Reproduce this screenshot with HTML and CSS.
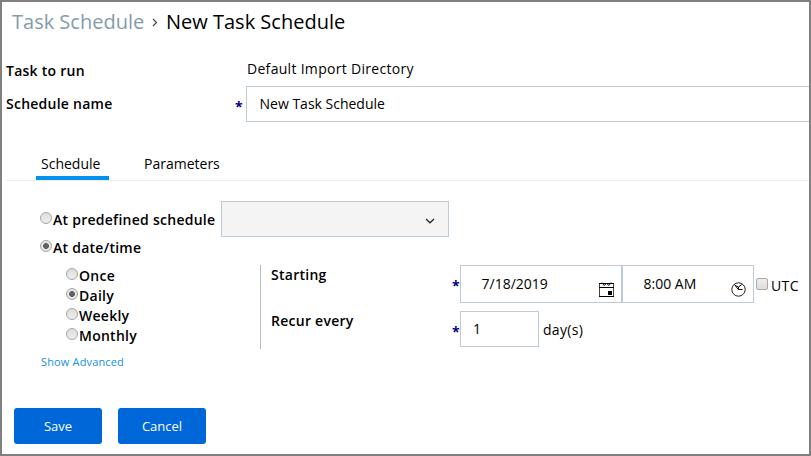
FILE: index.html
```html
<!DOCTYPE html>
<html lang="en">
<head>
<meta charset="utf-8">
<title>New Task Schedule</title>
<link rel="stylesheet" href="styles.css">
</head>
<body>
<main class="page">
  <nav class="breadcrumb">
    <a class="crumb">Task Schedule</a>
    <svg class="crumb-arrow" width="6" height="9" viewBox="0 0 6 9"><path d="M1 1l3.5 3.5L1 8" fill="none" stroke="#444" stroke-width="1.2"/></svg>
    <span class="current">New Task Schedule</span>
  </nav>
  <div class="row task-row"><span class="label">Task to run</span><span class="task-value">Default Import Directory</span></div>
  <div class="row name-row"><span class="label">Schedule name</span><span class="required">*</span><div class="field name-field"><span>New Task Schedule</span></div></div>
  <div class="tabs"><a class="tab active"><span>Schedule</span></a><a class="tab"><span>Parameters</span></a></div>
  <section class="schedule">
    <div class="row predefined"><i class="radio"></i><span class="predefined-label">At predefined schedule</span>
      <div class="select"><svg width="10" height="6" viewBox="0 0 10 6"><path d="M1 1l4 3.8L9 1" fill="none" stroke="#222" stroke-width="1.2"/></svg></div></div>
    <div class="row datetime"><i class="radio checked"></i><span>At date/time</span></div>
    <div class="details">
      <div class="frequency">
        <div class="option"><i class="radio"></i><span>Once</span></div>
        <div class="option"><i class="radio checked"></i><span>Daily</span></div>
        <div class="option"><i class="radio"></i><span>Weekly</span></div>
        <div class="option"><i class="radio"></i><span>Monthly</span></div>
      </div>
      <div class="timing">
        <div class="row starting"><span class="timing-label">Starting</span><span class="required">*</span>
          <div class="field date"><span>7/18/2019</span><svg width="15" height="16" viewBox="0 0 15 16"><path d="M.5 1v14M14.5 1v14" fill="none" stroke="#444"/><path d="M0 1.5h15M0 5.5h15M0 14.5h15" fill="none" stroke="#000"/><path d="M3 .5l2 3 2.5-2 2.5 2 2-3" fill="none" stroke="#111"/><path d="M9 9h4v4H9z" fill="#000"/></svg></div>
          <div class="field time"><span>8:00 AM</span><svg width="15" height="15" viewBox="0 0 15 15"><circle cx="7.5" cy="7.5" r="6.7" fill="none" stroke="#222"/><path d="M3.5 2.5L7.3 7.5H11.5M4 3.5l3.5 1.5L10.8 2.5M7.5 5v2.5" fill="none" stroke="#111"/></svg></div>
          <i class="checkbox"></i><span class="utc">UTC</span>
        </div>
        <div class="row recur"><span class="timing-label">Recur every</span><span class="required">*</span><div class="field count"><span>1</span></div><span class="days">day(s)</span></div>
      </div>
    </div>
    <a class="advanced">Show Advanced</a>
  </section>
  <div class="actions"><button>Save</button><button>Cancel</button></div>
</main>
</body>
</html>
```
FILE: styles.css
```css
* { box-sizing: border-box; }
body { margin: 0; font: 14px/20px "Open Sans", sans-serif; color: #000; background: #fff; }
.page { width: 811px; height: 456px; border: 2px solid #808080; overflow: hidden; white-space: nowrap; }
svg { display: block; flex: none; }
.row { display: flex; }
.label { width: 229px; flex: none; font-weight: 600; letter-spacing: .25px; }
.breadcrumb { display: flex; align-items: center; height: 40px; padding-left: 10px; font-size: 20px; line-height: 28px; }
.crumb { width: 132px; margin-right: 8px; color: #839ca9; }
.crumb-arrow { margin-right: 8px; }
.task-row { height: 44px; padding: 16px 0 0 4px; align-items: flex-start; }
.task-row .label { width: 241px; padding-top: 3px; }
.task-value { padding-top: 1px; letter-spacing: .3px; }
.name-row { height: 36px; padding-left: 4px; align-items: center; }
.required { width: 11px; flex: none; color: #00008b; font-weight: 700; line-height: 20px; padding-top: 6px; }
.field { display: flex; align-items: center; flex: none; border: 1px solid #bdcbd7; background: #fff; }
.name-field { width: 575px; height: 36px; padding-left: 12.5px; }
.tabs { display: flex; height: 59px; margin: 0 0 20px 4px; padding-left: 30px; border-bottom: 1px solid #e8edf1; }
.tab { height: 58px; padding: 32px 5px 0; margin-right: 30px; }
.tab.active { width: 73px; border-bottom: 4px solid #0590eb; }
.schedule { padding-left: 38px; font-weight: 600; letter-spacing: .26px; }
.predefined { height: 36px; }
.radio { flex: none; width: 12px; height: 12px; border: 1px solid #a6a6a6; border-radius: 50%; background: linear-gradient(#ddd, #eee); }
.radio.checked { background: radial-gradient(circle, #606060 0 2.6px, #e6e6e6 3.2px); }
.predefined .radio { margin-top: 11px; }
.predefined-label { width: 169px; padding: 9px 0 0 1px; }
.select { display: flex; align-items: center; justify-content: flex-end; width: 228px; height: 36px; padding: 3px 13px 0 0; border: 1px solid #bdcbd7; background: #f4f4f4; }
.datetime { height: 28px; }
.datetime .radio { margin-top: 3px; }
.datetime span { padding: 1px 0 0 1px; }
.details { display: flex; height: 84px; }
.frequency { width: 220px; padding-left: 26px; }
.option { display: flex; height: 20px; }
.option .radio { margin-top: 3px; }
.option span { padding: 1px 0 0 1px; }
.timing { border-left: 1px solid #bbb; padding-left: 10px; }
.timing-label { width: 181px; flex: none; }
.starting { height: 38px; }
.starting .required, .recur .required { width: 8px; padding-top: 11px; }
.field span, .utc, .days { font-weight: 400; letter-spacing: 0; }
.date, .time { height: 38px; padding-left: 20.5px; }
.date { width: 162px; }
.time { width: 132px; }
.date svg, .time svg { margin: 11px 7px 0 auto; }
.checkbox { flex: none; width: 12px; height: 12px; margin: 13px 3px 0 2px; border: 1px solid #aaa; border-radius: 2px; background: linear-gradient(#eee, #ddd); }
.utc { padding-top: 11px; letter-spacing: .4px; }
.recur { height: 36px; margin-top: 8px; }
.count { width: 79px; height: 36px; padding-left: 12px; }
.days { padding: 9px 0 0 4px; letter-spacing: .3px; }
.advanced { display: block; width: 100px; margin: 3px 0 0 1px; font-size: 11px; font-weight: 400; letter-spacing: .15px; color: #168fe6; }
.actions { display: flex; gap: 16px; margin: 36px 0 0 12px; }
button { width: 88px; height: 36px; padding: 0; border: 0; border-radius: 3px; background: #0067d9; color: #fff; font: 13px/20px "Open Sans", sans-serif; }
```
